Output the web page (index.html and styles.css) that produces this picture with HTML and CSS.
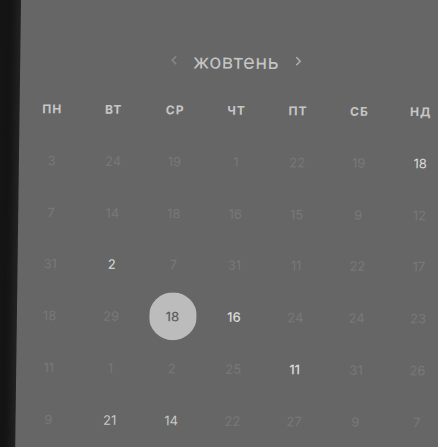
FILE: index.html
```html
<!DOCTYPE html>
<html lang="uk">
<head>
    <meta name="viewport" content="width=device-width, initial-scale=1.0">
    <link rel="stylesheet" href="styles.css">
    <title>Календар</title>
</head>
<body>
    <div class="panel">
        <div class="month">
            <svg class="arrow" width="8" height="12" viewBox="0 0 8 12"><path d="M6 2 L2 6 L6 10" fill="none" stroke="#8a8a8a" stroke-width="1.4"/></svg>
            <span class="month-name">жовтень</span>
            <svg class="arrow" width="8" height="12" viewBox="0 0 8 12"><path d="M2 2 L6 6 L2 10" fill="none" stroke="#b0b0b0" stroke-width="1.4"/></svg>
        </div>
        <div class="grid">
            <div class="head">пн</div><div class="head">вт</div><div class="head">ср</div><div class="head">чт</div><div class="head">пт</div><div class="head">сб</div><div class="head">нд</div>

            <div class="day">3</div><div class="day">24</div><div class="day">19</div><div class="day">1</div><div class="day">22</div><div class="day">19</div><div class="day on">18</div>

            <div class="day">7</div><div class="day">14</div><div class="day">18</div><div class="day">16</div><div class="day">15</div><div class="day">9</div><div class="day">12</div>

            <div class="day">31</div><div class="day on">2</div><div class="day">7</div><div class="day">31</div><div class="day">11</div><div class="day">22</div><div class="day">17</div>

            <div class="day">18</div><div class="day">29</div><div class="day"><span class="picked">18</span></div><div class="day on strong">16</div><div class="day">24</div><div class="day">24</div><div class="day">23</div>

            <div class="day">11</div><div class="day">1</div><div class="day">2</div><div class="day">25</div><div class="day on strong">11</div><div class="day">31</div><div class="day">26</div>

            <div class="day">9</div><div class="day on soft">21</div><div class="day on soft">14</div><div class="day">22</div><div class="day">27</div><div class="day">9</div><div class="day">7</div>
        </div>
    </div>
</body>
</html>
```

FILE: styles.css
```css
* {box-sizing: border-box;}

body {
    margin: 0;
    background-color: #141414;
    overflow: hidden;
    height: 447px;
    font-family: Inter, "Noto Sans", sans-serif;
}

/* Calendar sheet, slightly tilted (leans left, dips right) */
.panel {
    margin-top: -10px;
    margin-left: 21px;
    width: 440px;
    height: 520px;
    padding-top: 54px;
    background-color: #666666;
    box-shadow: -5px 0 7px #232323;
    transform: matrix(1, 0.008, -0.013, 1, 0, 0);
    transform-origin: 0 10px;
}

.month {
    width: 432px;
    height: 32px;
    margin-bottom: 7px;
    display: flex;
    align-items: center;
    justify-content: center;
    gap: 15px;
}

.month-name {
    font-size: 20px;
    color: #c4c4c4;
    letter-spacing: 0.5px;
}

.arrow {
    margin-top: -3px;
}

.grid {
    width: 432px;
    padding-left: 2px;
    display: grid;
    grid-template-columns: repeat(7, 1fr);
    grid-template-rows: 51px;
    grid-auto-rows: 51.8px;
}

.head, .day {
    display: flex;
    align-items: center;
    justify-content: center;
}

.head {
    font-size: 12px;
    font-weight: 700;
    color: #c6c6c6;
    text-transform: uppercase;
    letter-spacing: 1px;
}

.day {
    font-size: 13px;
    color: #787878;
}

.day.on {
    color: #dcdcdc;
}

.day.strong {
    font-weight: 500;
}

.day.soft {
    color: #c8c8c8;
}

.picked {
    width: 48px;
    height: 48px;
    border-radius: 50%;
    background-color: #bcbcbc;
    color: #5e5e5e;
    font-weight: 500;
    display: flex;
    align-items: center;
    justify-content: center;
    clip-path: inset(0 0 0 1px);
}
```
